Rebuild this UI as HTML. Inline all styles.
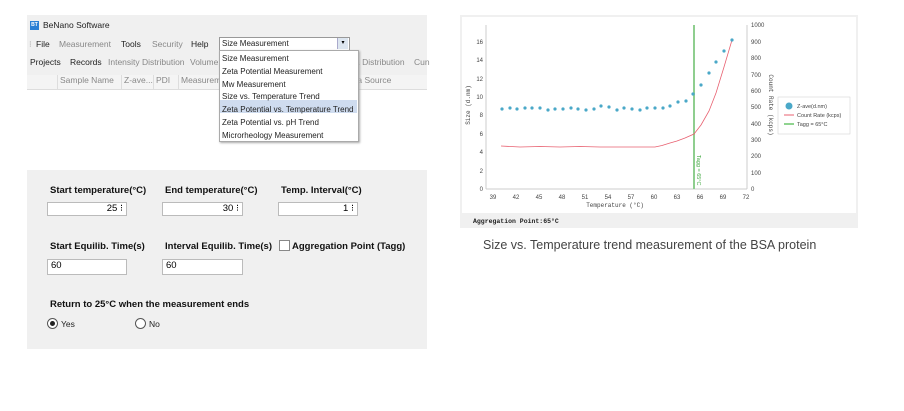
<!DOCTYPE html>
<html><head><meta charset="utf-8"><style>
body{margin:0;width:904px;height:411px;background:#fff;font-family:"Liberation Sans",sans-serif;position:relative;overflow:hidden}
.a{position:absolute}
.s{font-size:8.5px;color:#222;white-space:nowrap}
.g{color:#888}
.b{font-weight:bold;font-size:9.5px;color:#111}
.in{background:#fff;border:1px solid #bbb;height:14px;font-size:9.5px;box-sizing:border-box;line-height:12px;padding:0 3px}
</style></head><body>
<div class="a" style="left:27px;top:15px;width:400px;height:74px;background:#f0f0f0"></div>
<div class="a" style="left:27px;top:75px;width:400px;height:14px;background:#f4f4f4;border-bottom:1px solid #ddd"></div>
<div class="a" style="left:30px;top:21px;width:9px;height:9px;background:#2b7fd4;color:#fff;font-size:5px;font-weight:bold;line-height:9px;text-align:center">BT</div>
<div class="a s" style="left:43px;top:20px">BeNano Software</div>
<div class="a s" style="left:29px;top:39px;color:#aaa">⁝</div>
<div class="a s" style="left:36px;top:39px">File</div>
<div class="a s g" style="left:59px;top:39px">Measurement</div>
<div class="a s" style="left:121px;top:39px">Tools</div>
<div class="a s g" style="left:152px;top:39px">Security</div>
<div class="a s" style="left:191px;top:39px">Help</div>
<div class="a s" style="left:30px;top:57px">Projects</div>
<div class="a s" style="left:70px;top:57px">Records</div>
<div class="a s g" style="left:108px;top:57px">Intensity Distribution</div>
<div class="a s g" style="left:190px;top:57px">Volume</div>
<div class="a s g" style="left:355px;top:57px">a Distribution</div>
<div class="a s g" style="left:414px;top:57px">Cun</div>
<div class="a s g" style="left:60px;top:75px">Sample Name</div>
<div class="a s g" style="left:124px;top:75px">Z-ave...</div>
<div class="a s g" style="left:156px;top:75px">PDI</div>
<div class="a s g" style="left:181px;top:75px">Measureme</div>
<div class="a s g" style="left:355px;top:75px">ta Source</div>
<div class="a" style="left:57px;top:75px;width:1px;height:14px;background:#ddd"></div>
<div class="a" style="left:121px;top:75px;width:1px;height:14px;background:#ddd"></div>
<div class="a" style="left:153px;top:75px;width:1px;height:14px;background:#ddd"></div>
<div class="a" style="left:178px;top:75px;width:1px;height:14px;background:#ddd"></div>
<div class="a" style="left:219px;top:37px;width:129px;height:12px;background:#fff;border:1px solid #999"></div>
<div class="a s" style="left:222px;top:39px;font-size:8px">Size Measurement</div>
<div class="a" style="left:337px;top:38px;width:10px;height:11px;background:#dde6f0;border-left:1px solid #aac;font-size:6px;text-align:center;line-height:11px">▾</div>
<div class="a" style="left:219px;top:50px;width:138px;height:90px;background:#fff;border:1px solid #aaa;box-shadow:1px 1px 2px #aaa"></div>
<div class="a" style="left:220px;top:100px;width:137px;height:13px;background:#cfdcef"></div>
<div class="a s" style="left:222px;top:53px;line-height:12.8px;font-size:8px">Size Measurement<br>Zeta Potential Measurement<br>Mw Measurement<br>Size vs. Temperature Trend<br>Zeta Potential vs. Temperature Trend<br>Zeta Potential vs. pH Trend<br>Microrheology Measurement</div>
<div class="a" style="left:27px;top:170px;width:400px;height:179px;background:#f0f0f0"></div>
<div class="a b" style="left:50px;top:185px">Start temperature(°C)</div>
<div class="a b" style="left:165px;top:185px">End temperature(°C)</div>
<div class="a b" style="left:281px;top:185px">Temp. Interval(°C)</div>
<div class="a in" style="left:47px;top:202px;width:80px;text-align:right">25 ⁝</div>
<div class="a in" style="left:162px;top:202px;width:81px;text-align:right">30 ⁝</div>
<div class="a in" style="left:278px;top:202px;width:80px;text-align:right">1 ⁝</div>
<div class="a b" style="left:50px;top:241px">Start Equilib. Time(s)</div>
<div class="a b" style="left:165px;top:241px">Interval Equilib. Time(s)</div>
<div class="a" style="left:279px;top:240px;width:9px;height:9px;background:#fff;border:1px solid #888"></div>
<div class="a b" style="left:292px;top:241px">Aggregation Point (Tagg)</div>
<div class="a in" style="left:47px;top:259px;width:80px;height:16px">60</div>
<div class="a in" style="left:162px;top:259px;width:81px;height:16px">60</div>
<div class="a b" style="left:50px;top:299px">Return to 25°C when the measurement ends</div>
<div class="a" style="left:47px;top:318px;width:9px;height:9px;border:1px solid #555;border-radius:50%;background:#fff"><div style="margin:2px;width:5px;height:5px;border-radius:50%;background:#222"></div></div>
<div class="a s" style="left:61px;top:319px">Yes</div>
<div class="a" style="left:135px;top:318px;width:9px;height:9px;border:1px solid #555;border-radius:50%;background:#fff"></div>
<div class="a s" style="left:149px;top:319px">No</div>
<div class="a" style="left:460px;top:15px;width:398px;height:213px;background:#f0f0f0"></div>
<svg class="a" style="left:0;top:0" width="904" height="411" font-family="Liberation Sans" font-size="6" fill="#444">
<rect x="462" y="17" width="394" height="196" fill="#fff"/>
<line x1="486" y1="25" x2="486" y2="189" stroke="#ccc"/>
<line x1="747" y1="25" x2="747" y2="189" stroke="#ccc"/>
<line x1="486" y1="189" x2="747" y2="189" stroke="#ccc"/>
<g text-anchor="end">
<text x="483" y="191">0</text><text x="483" y="173">2</text><text x="483" y="154">4</text><text x="483" y="136">6</text><text x="483" y="117">8</text><text x="483" y="99">10</text><text x="483" y="81">12</text><text x="483" y="62">14</text><text x="483" y="44">16</text></g>
<g><text x="751" y="191">0</text><text x="751" y="175">100</text><text x="751" y="158">200</text><text x="751" y="142">300</text><text x="751" y="126">400</text><text x="751" y="109">500</text><text x="751" y="93">600</text><text x="751" y="77">700</text><text x="751" y="60">800</text><text x="751" y="44">900</text><text x="751" y="27">1000</text></g>
<g text-anchor="middle"><text x="493" y="199">39</text><text x="516" y="199">42</text><text x="539" y="199">45</text><text x="562" y="199">48</text><text x="585" y="199">51</text><text x="608" y="199">54</text><text x="631" y="199">57</text><text x="654" y="199">60</text><text x="677" y="199">63</text><text x="700" y="199">66</text><text x="723" y="199">69</text><text x="746" y="199">72</text>
<text x="615" y="207" font-family="Liberation Mono">Temperature (°C)</text></g>
<text transform="translate(470,105) rotate(-90)" text-anchor="middle" font-family="Liberation Mono">Size (d.nm)</text>
<text transform="translate(769,105) rotate(90)" text-anchor="middle" font-family="Liberation Mono">Count Rate (kcps)</text>
<rect x="693" y="25" width="2" height="164" fill="#8fce8f"/>
<text transform="translate(697,155) rotate(90)" fill="#4a4" font-size="5.5">Tagg = 65°C</text>
<polyline fill="none" stroke="#e86070" stroke-width="0.8" points="501,146 520,147 540,146.5 560,147 580,146.5 600,147 620,147 655,147 662,145.5 670,143 677,141 685,138 694,134 701,125 709,111 716,93 724,67 732,40"/>
<rect x="778" y="97" width="72" height="37" fill="#fff" stroke="#ccc" stroke-width="0.5"/>
<circle cx="789" cy="106" r="3.5" fill="#4aa8c8"/><text x="797" y="108" font-size="5.5">Z-ave(d.nm)</text>
<line x1="784" y1="115" x2="794" y2="115" stroke="#e86070"/><text x="797" y="117" font-size="5.5">Count Rate (kcps)</text>
<line x1="784" y1="124" x2="794" y2="124" stroke="#2a2"/><text x="797" y="126" font-size="5.5">Tagg = 65°C</text>
<text x="473" y="223" font-family="Liberation Mono" font-size="6.5" fill="#222" font-weight="bold">Aggregation Point:65°C</text>
<g fill="#4aa8c8">
<circle cx="502" cy="109" r="1.6"/><circle cx="510" cy="108" r="1.6"/><circle cx="517" cy="109" r="1.6"/><circle cx="525" cy="108" r="1.6"/><circle cx="532" cy="108" r="1.6"/><circle cx="540" cy="108" r="1.6"/><circle cx="548" cy="110" r="1.6"/><circle cx="555" cy="109" r="1.6"/><circle cx="563" cy="109" r="1.6"/><circle cx="571" cy="108" r="1.6"/><circle cx="578" cy="109" r="1.6"/><circle cx="586" cy="110" r="1.6"/><circle cx="594" cy="109" r="1.6"/><circle cx="601" cy="106" r="1.6"/><circle cx="609" cy="107" r="1.6"/><circle cx="617" cy="110" r="1.6"/><circle cx="624" cy="108" r="1.6"/><circle cx="632" cy="109" r="1.6"/><circle cx="640" cy="110" r="1.6"/><circle cx="647" cy="108" r="1.6"/><circle cx="655" cy="108" r="1.6"/><circle cx="663" cy="108" r="1.6"/><circle cx="670" cy="106" r="1.6"/><circle cx="678" cy="102" r="1.6"/><circle cx="686" cy="101" r="1.6"/><circle cx="693" cy="94" r="1.6"/><circle cx="701" cy="85" r="1.6"/><circle cx="709" cy="73" r="1.6"/><circle cx="716" cy="62" r="1.6"/><circle cx="724" cy="51" r="1.6"/><circle cx="732" cy="40" r="1.6"/>
</g></svg>
<div class="a" style="left:483px;top:238px;font-size:12.5px;color:#444;white-space:nowrap">Size vs. Temperature trend measurement of the BSA protein</div>
</body></html>
